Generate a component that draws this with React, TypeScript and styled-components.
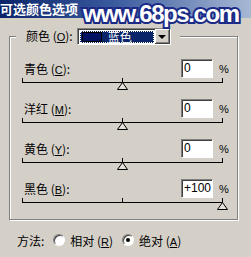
import React from "react";
import styled, { createGlobalStyle } from "styled-components";

const GlobalStyle = createGlobalStyle`
  html, body {
    margin: 0;
    padding: 0;
    background: #d4d0c8;
  }
  body {
    font-family: "Noto Sans CJK SC", "Liberation Sans", sans-serif;
    font-size: 12px;
    color: #000;
  }
`;

// Window frame
const Window = styled.div`
  position: relative;
  width: 251px;
  height: 257px;
  overflow: hidden;
  background: #d4d0c8;
`;

const TitleBar = styled.div`
  height: 18px;
  display: flex;
  align-items: center;
  background: linear-gradient(to right, #0a246a 0%, #3a5a9e 45%, #a6b8d4 100%);
`;

const TitleText = styled.span`
  color: #fff;
  font-weight: bold;
  font-size: 13px;
  line-height: 18px;
  white-space: nowrap;
`;

const Watermark = styled.div`
  position: absolute;
  left: 83px;
  top: 1px;
  font-family: "Liberation Sans", "DejaVu Sans", sans-serif;
  font-weight: bold;
  font-size: 24px;
  line-height: 26px;
  letter-spacing: -1.4px;
  color: #fff;
  -webkit-text-stroke: 4px #1a2a86;
  paint-order: stroke fill;
  white-space: nowrap;
`;

// Group box
const GroupBox = styled.fieldset`
  margin: 10px 0 0 9px;
  width: 229px;
  box-sizing: border-box;
  padding: 14px 8px 0 6px;
  border: 1px solid #808080;
  box-shadow: inset 1px 1px 0 #fff, 1px 1px 0 #fff;
  min-width: 0;
`;

const Legend = styled.legend`
  display: flex;
  align-items: center;
  gap: 4px;
  padding: 0 9px 0 10px;
  background: #d4d0c8;
  height: 17px;
`;

const Label = styled.span`
  white-space: nowrap;
  line-height: 14px;
`;

const Select = styled.div`
  flex: none;
  width: 94px;
  height: 17px;
  box-sizing: border-box;
  display: flex;
  border-top: 1px solid #808080;
  border-left: 1px solid #808080;
  border-bottom: 1px solid #fff;
  border-right: 1px solid #fff;
`;

const SelectInner = styled.div`
  flex: 1;
  display: flex;
  border-top: 1px solid #404040;
  border-left: 1px solid #404040;
  background: #fff;
  padding: 1px;
`;

const SelectValue = styled.div`
  flex: 1;
  display: flex;
  align-items: center;
  box-sizing: border-box;
  background: #0a246a;
  border: 1px dotted #fff;
  padding: 0 1px;
`;

const Swatch = styled.span`
  flex: none;
  width: 18px;
  height: 8px;
  background: #001260;
  border: 1px solid #000;
  margin-right: 6px;
`;

const SelectText = styled.span`
  color: #fff;
  font-size: 12px;
  line-height: 10px;
  white-space: nowrap;
`;

const ArrowButton = styled.div`
  flex: none;
  width: 15px;
  background: #d4d0c8;
  display: flex;
  align-items: center;
  justify-content: center;
  box-shadow: inset -1px -1px 0 #404040, inset 1px 1px 0 #fff, inset -2px -2px 0 #808080;
`;

const Arrow = styled.span`
  width: 0;
  height: 0;
  border-left: 4px solid transparent;
  border-right: 4px solid transparent;
  border-top: 4px solid #000;
`;

const Content = styled.div`
  padding-left: 6px;
`;

const Row = styled.div`
  display: flex;
  align-items: center;
  height: 19px;
`;

const RowLabel = styled.span`
  flex: 1;
  padding-left: 2px;
  white-space: nowrap;
`;

const NumberBox = styled.div`
  width: 32px;
  height: 19px;
  box-sizing: border-box;
  background: #fff;
  border-top: 1px solid #808080;
  border-left: 1px solid #808080;
  border-bottom: 1px solid #fff;
  border-right: 1px solid #fff;
  box-shadow: inset 1px 1px 0 #404040;
  padding: 1px 0 0 2px;
  font-family: "Liberation Sans", sans-serif;
  font-size: 12px;
  line-height: 15px;
`;

const Percent = styled.span`
  width: 10px;
  margin-left: 6px;
  font-size: 11px;
  font-family: "Liberation Sans", sans-serif;
`;

const Slider = styled.div`
  position: relative;
  width: 201px;
  height: 21px;
`;

const Track = styled.div`
  position: absolute;
  left: 0;
  right: 0;
  top: 4px;
  height: 1px;
  background: #000;
`;

const Tick = styled.div<{ $at: number }>`
  position: absolute;
  top: 0;
  left: ${(p) => p.$at}px;
  width: 1px;
  height: 4px;
  background: #000;
`;

const Thumb = styled.svg<{ $at: number }>`
  position: absolute;
  top: 4px;
  left: ${(p) => p.$at - 5}px;
`;

const MethodRow = styled.div`
  display: flex;
  align-items: center;
  margin: 13px 0 0 17px;
  height: 14px;
`;

const RadioItem = styled.label`
  display: flex;
  align-items: center;
  margin-left: 9px;
  gap: 5px;
  white-space: nowrap;
`;

const Radio = styled.span<{ $checked?: boolean }>`
  position: relative;
  width: 12px;
  height: 12px;
  box-sizing: border-box;
  border-radius: 50%;
  background: #fff;
  border: 1px solid;
  border-color: #808080 #fff #fff #808080;
  box-shadow: inset 1px 1px 0 #404040;
  &::after {
    content: "";
    display: ${(p) => (p.$checked ? "block" : "none")};
    position: absolute;
    left: 3px;
    top: 3px;
    width: 4px;
    height: 4px;
    border-radius: 50%;
    background: #000;
  }
`;

const Mnemonic = styled.u`
  font-family: "Liberation Sans", sans-serif;
  font-size: 11px;
`;

const rows = [
  { name: "青色", key: "C", value: "0", pos: 100 },
  { name: "洋红", key: "M", value: "0", pos: 100 },
  { name: "黄色", key: "Y", value: "0", pos: 100 },
  { name: "黑色", key: "B", value: "+100", pos: 200 },
];

const App: React.FC = () => {
  return (
    <>
      <GlobalStyle />
      <Window>
        <TitleBar>
          <TitleText>可选颜色选项</TitleText>
        </TitleBar>
        <Watermark>www.68ps.com</Watermark>

        <GroupBox>
          <Legend>
            <Label>
              颜色 (<Mnemonic>O</Mnemonic>):
            </Label>
            <Select>
              <SelectInner>
                <SelectValue>
                  <Swatch />
                  <SelectText>蓝色</SelectText>
                </SelectValue>
              </SelectInner>
              <ArrowButton>
                <Arrow />
              </ArrowButton>
            </Select>
          </Legend>

          <Content>
            {rows.map((r) => (
              <div key={r.key}>
                <Row>
                  <RowLabel>
                    {r.name} (<Mnemonic>{r.key}</Mnemonic>):
                  </RowLabel>
                  <NumberBox>{r.value}</NumberBox>
                  <Percent>%</Percent>
                </Row>
                <Slider>
                  <Track />
                  <Tick $at={0} />
                  <Tick $at={100} />
                  <Tick $at={200} />
                  <Thumb $at={r.pos} width="11" height="8" viewBox="0 0 11 8">
                    <path d="M5.5 0.5 L10.5 7.5 L0.5 7.5 Z" fill="#e4e2dc" stroke="#000" strokeWidth="1" />
                  </Thumb>
                </Slider>
              </div>
            ))}
          </Content>
        </GroupBox>

        <MethodRow>
          <span>方法:</span>
          <RadioItem>
            <Radio />
            <span>
              相对 (<Mnemonic>R</Mnemonic>)
            </span>
          </RadioItem>
          <RadioItem>
            <Radio $checked />
            <span>
              绝对 (<Mnemonic>A</Mnemonic>)
            </span>
          </RadioItem>
        </MethodRow>
      </Window>
    </>
  );
};

export default App;
